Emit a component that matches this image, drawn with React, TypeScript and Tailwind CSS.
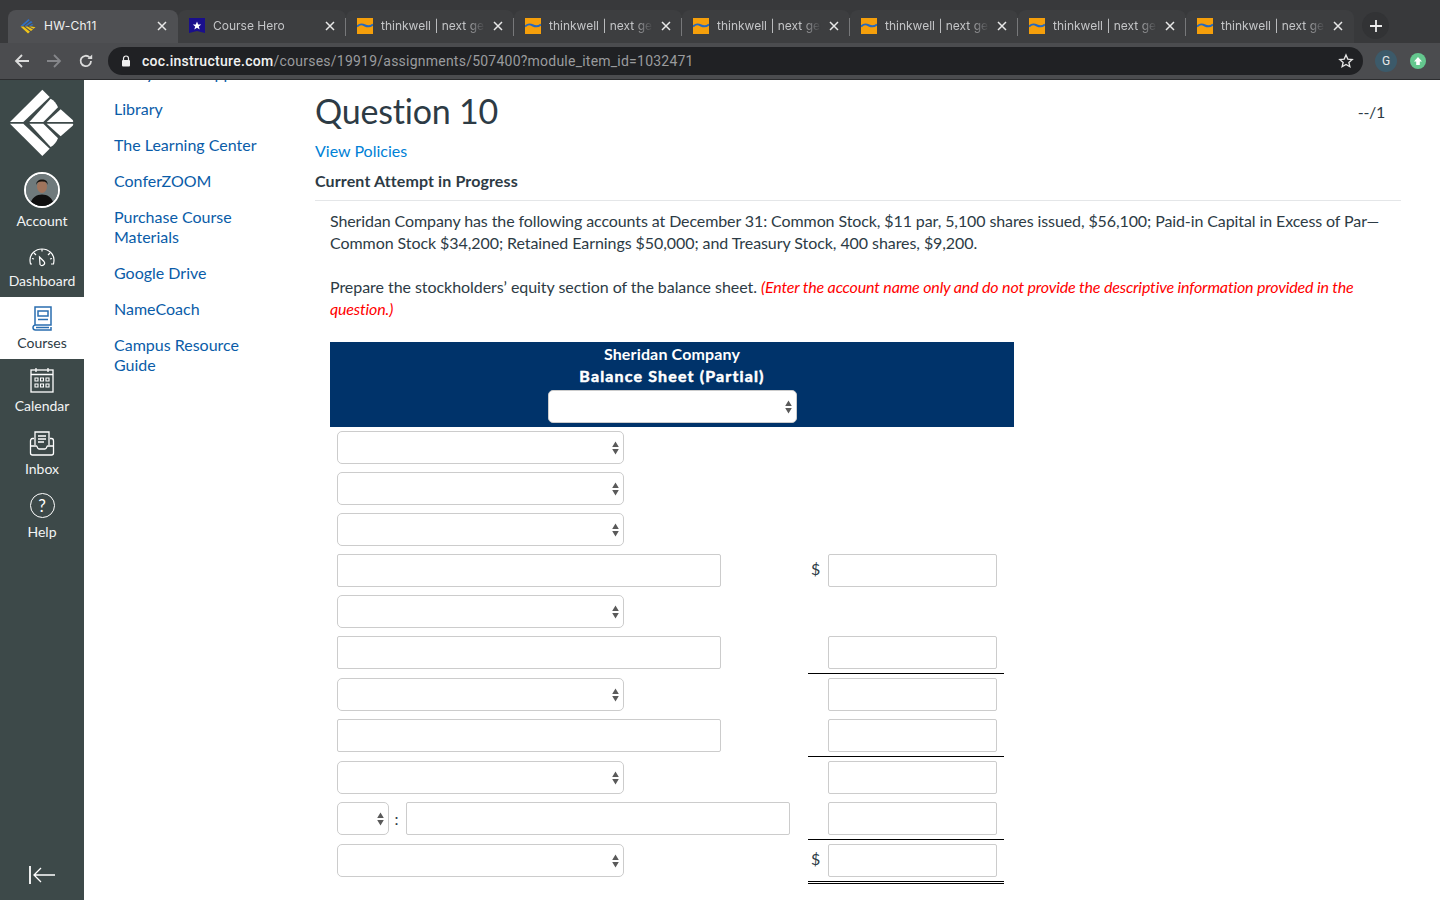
import React from "react";

const lato = { fontFamily: "Lato, sans-serif" };

function Favicon({ kind }: { kind: "canvas" | "hero" | "tw" }) {
  if (kind === "canvas")
    return (
      <svg width="16" height="16" viewBox="0 0 16 16" className="shrink-0">
        <path d="M8.5 1 L0.500 8 L3 8 L9.800 2.300Z M11 3 L4.500 8 L6.500 8 L12.500 4.200Z M12 6 L9 8 L11 8 L13.500 6.800Z" fill="#2f6fc4" />
        <path d="M0.500 8.500L8 15.500 L10 13.800 L3.500 8.500Z M5 8.500 L11 13 L13 11.500 L7.500 8.500Z M9 8.500 L13.500 10.800 L15.500 9.200 L11.500 8.500Z" fill="#f0c419" />
      </svg>
    );
  if (kind === "hero")
    return (
      <svg width="16" height="16" viewBox="0 0 16 16" className="shrink-0">
        <path d="M0 0H16V15L8 13L0 15Z" fill="#1a0f8c" />
        <path d="M8 3.500l1.200 3h3l-2.400 2 .9 3L8 9.800 5.300 11.500l.9-3-2.400-2h3z" fill="#fff" />
      </svg>
    );
  return (
    <svg width="16" height="16" viewBox="0 0 16 16" className="shrink-0">
      <rect width="16" height="16" fill="#f59f0b" />
      <path d="M0 8.500C3 5.500 5 6 8 7.500S13 9 16 6.500" stroke="#2468c0" strokeWidth="2" fill="none" />
    </svg>
  );
}

function X({ color = "#e8e8e8" }: { color?: string }) {
  return (
    <svg width="10" height="10" viewBox="0 0 10 10" className="shrink-0">
      <path d="M1 1L9 9M9 1L1 9" stroke={color} strokeWidth="1.500" />
    </svg>
  );
}

function Tab({ icon, title, active, sep }: { icon: "canvas" | "hero" | "tw"; title: string; active?: boolean; sep?: boolean }) {
  return (
    <div
      className={
        active
          ? "relative flex h-[33px] w-[170px] shrink-0 items-center gap-[8px] rounded-t-[8px] bg-[#4f5053] pb-[1px] pl-[12px] pr-[11px]"
          : "relative flex h-[33px] w-[168px] shrink-0 items-center gap-[8px] rounded-t-[8px] bg-[#3d3e40] pb-[1px] pl-[11px] pr-[11px]"
      }
    >
      <Favicon kind={icon} />
      <span
        className={
          active
            ? "flex-1 overflow-hidden whitespace-nowrap text-[12px] tracking-[0.25px] text-[#f0f0f0]"
            : "flex-1 overflow-hidden whitespace-nowrap text-[12px] text-[#c4c5c7] [mask-image:linear-gradient(to_right,black_80%,transparent)]"
        }
        style={{ fontFamily: "Inter, sans-serif" }}
      >
        {title}
      </span>
      <X />
      {sep && <div className="absolute right-0 top-[8px] h-[18px] w-px bg-[#77787a]" />}
    </div>
  );
}

function ChromeBar() {
  return (
    <div className="shrink-0">
      <div className="flex h-[43px] items-end bg-[#38393b] pl-[8px]">
        <Tab icon="canvas" title="HW-Ch11" active />
        <Tab icon="hero" title="Course Hero" sep />
        {Array.from({ length: 6 }).map((_, i) => (
          <Tab key={i} icon="tw" title="thinkwell | next generation" sep={i < 5} />
        ))}
        <div className="mb-[4px] ml-[8px] flex h-[27px] w-[27px] items-center justify-center rounded-full bg-[#323335]">
          <svg width="14" height="14" viewBox="0 0 14 14">
            <path d="M7 1V13M1 7H13" stroke="#ededed" strokeWidth="1.800" />
          </svg>
        </div>
      </div>
      <div className="flex h-[37px] items-center border-b border-[#2c2d2f] bg-[#4b4c4f] pl-[14px] pr-[14px]">
        <svg width="16" height="16" viewBox="0 0 16 16" className="shrink-0">
          <path d="M15 8H2M8 2L2 8L8 14" stroke="#dcdcdc" strokeWidth="1.800" fill="none" />
        </svg>
        <svg width="16" height="16" viewBox="0 0 16 16" className="ml-[16px] shrink-0">
          <path d="M1 8H14M8 2L14 8L8 14" stroke="#85868a" strokeWidth="1.800" fill="none" />
        </svg>
        <svg width="16" height="16" viewBox="0 0 16 16" className="ml-[16px] shrink-0">
          <path d="M13 8A5.200 5.200 0 1 1 11.500 4.300" stroke="#dcdcdc" strokeWidth="1.800" fill="none" />
          <path d="M9.500 6H14.200V1.500Z" fill="#dcdcdc" />
        </svg>
        <div className="ml-[14px] flex h-[28px] w-[1255px] shrink-0 items-center rounded-full bg-[#202124] pl-[13px] pr-[9px]">
          <svg width="10" height="12" viewBox="0 0 10 12" className="shrink-0">
            <path d="M2.500 5V3.500a2.500 2.500 0 0 1 5 0V5" stroke="#f0f0f0" strokeWidth="1.200" fill="none" />
            <rect x="1" y="5" width="8" height="6.500" rx="1" fill="#f0f0f0" />
          </svg>
          <span className="ml-[11px] flex-1 whitespace-nowrap text-[14px]" style={{ fontFamily: "Roboto, sans-serif" }}>
            <span className="font-medium tracking-[0.3px] text-[#f1f1f1]">coc.instructure.com</span>
            <span className="tracking-[0.23px] text-[#9a9b9e]">/courses/19919/assignments/507400?module_item_id=1032471</span>
          </span>
          <svg width="16" height="16" viewBox="0 0 24 24" className="shrink-0">
            <path d="M12 3l2.700 6.100 6.600.6-5 4.400 1.500 6.500L12 17.200 6.200 20.600l1.500-6.500-5-4.400 6.600-.6z" stroke="#e6e6e6" strokeWidth="2" fill="none" />
          </svg>
        </div>
        <div className="ml-[12px] flex h-[22px] w-[22px] shrink-0 items-center justify-center rounded-full bg-[#3c5a6a] text-[12px] text-[#e8e8e8]" style={{ fontFamily: "Roboto, sans-serif" }}>
          G
        </div>
        <div className="ml-[13px] flex h-[16px] w-[16px] shrink-0 items-center justify-center rounded-full bg-[#64c78e]">
          <svg width="10" height="10" viewBox="0 0 10 10">
            <path d="M5 1L9 5.500H6.800V9H3.200V5.500H1Z" fill="#fff" />
          </svg>
        </div>
      </div>
    </div>
  );
}

function NavItem({ label, active, children, cls, gap }: { label: string; active?: boolean; children: React.ReactNode; cls: string; gap: string }) {
  return (
    <div className={`flex flex-col items-center text-[14px] leading-[20px] ${cls} ${active ? "bg-white text-[#2d3b45]" : "text-[#f2f4f4]"}`}>
      <div className="flex h-[28px] items-center justify-center">{children}</div>
      <span className={gap}>{label}</span>
    </div>
  );
}

function Logo() {
  return (
    <svg width="68" height="68" viewBox="26 13 196 204" fill="#fff">
      <path d="M125 15L147 37L68 112H28Z" />
      <path d="M150 42Q165 50 172 68L128 112H86Z" />
      <path d="M180 74L216 106Q220 111 216 112H138Z" />
      <path d="M28 117H68L147 192L125 214Z" />
      <path d="M86 117H128L172 161Q165 179 150 187Z" />
      <path d="M138 117H216Q220 118 216 123L180 155Z" />
    </svg>
  );
}

function Sidebar() {
  return (
    <div className="flex w-[84px] shrink-0 flex-col bg-[#3d4949]" style={lato}>
      <div className="flex h-[86px] items-center justify-center">
        <Logo />
      </div>
      <div className="flex h-[67px] flex-col items-center pt-[6px] text-[14px] leading-[20px] text-[#f2f4f4]">
        <div className="flex h-[36px] w-[36px] items-center justify-center overflow-hidden rounded-full border-2 border-white bg-[#6f7a7c]">
          <svg width="32" height="32" viewBox="0 0 32 32">
            <rect width="32" height="32" fill="#6f7a7c" />
            <ellipse cx="16" cy="12.500" rx="5" ry="6.500" fill="#a0745c" />
            <path d="M10.500 11C9 4 23 3.500 21.500 11C21 8 19 7.500 16 7.500S11 8 10.500 11Z" fill="#16120f" />
            <path d="M4 32C5 23 11 20.500 16 20.500S27 23 28 32Z" fill="#0f0f0f" />
          </svg>
        </div>
        <span className="mt-[3px]">Account</span>
      </div>
      <NavItem label="Dashboard" cls="h-[64px] pt-[10px]" gap="mt-0">
        <svg width="26" height="20" viewBox="0 0 26 20" fill="none" stroke="#fff" strokeWidth="1.200">
          <path d="M3 17H1.500C1.200 15.500 1 14.500 1 13A12 11 0 0 1 25 13C25 14.500 24.800 15.500 24.500 17H22" />
          <path d="M5 6L7 8M13 2V4.500M21 6L19 8M3 11.500L5 12M23 11.500L21 12" />
          <path d="M10.500 10L15 14.500A2.500 2.500 0 0 1 11 17.500Z" />
        </svg>
      </NavItem>
      <NavItem label="Courses" active cls="h-[62px] pt-[7px]" gap="mt-[1px]">
        <svg width="20" height="25" viewBox="0 0 20 25" fill="none" stroke="#2a6eb0" strokeWidth="1.500">
          <path d="M3 19V1H19V19H3.500A2.500 2.500 0 0 0 3.500 24H19V21" />
          <rect x="6" y="5" width="10" height="5" />
          <path d="M6 13.500H16" />
          <path d="M4 21.500H17" />
        </svg>
      </NavItem>
      <NavItem label="Calendar" cls="h-[63px] pt-[7px]" gap="mt-[2px]">
        <svg width="24" height="26" viewBox="0 0 24 26" fill="none" stroke="#fff" strokeWidth="1.300">
          <rect x="1" y="3" width="22" height="22" />
          <path d="M1 7.500H23M6 1V5M18 1V5" />
          <path d="M5 11h3v3H5zM10.500 11h3v3h-3zM16 11h3v3h-3zM5 17h3v3H5zM10.500 17h3v3h-3zM16 17h3v3h-3z" strokeWidth="1.100" />
        </svg>
      </NavItem>
      <NavItem label="Inbox" cls="h-[63px] pt-[7px]" gap="mt-[2px]">
        <svg width="26" height="25" viewBox="0 0 26 25" fill="none" stroke="#fff" strokeWidth="1.300">
          <path d="M6 14V1H20V14" />
          <path d="M9 5H17M9 8H17M9 11H15" />
          <path d="M5 7.500H3.500C2 7.500 1.500 9 1.500 10V22A2 2 0 0 0 3.500 24H22.500A2 2 0 0 0 24.500 22V10C24.500 9 24 7.500 22.500 7.500H21" />
          <path d="M1.500 15H7.500C8.500 15 8 18 10 18H16C18 18 17.500 15 18.500 15H24.500" />
        </svg>
      </NavItem>
      <NavItem label="Help" cls="h-[63px] pt-[6px]" gap="mt-[3px]">
        <div className="flex h-[25px] w-[25px] items-center justify-center rounded-full border-[1.500px] border-white text-[17px] leading-none text-white" style={lato}>
          ?
        </div>
      </NavItem>
      <div className="mt-auto flex h-[50px] items-start justify-center pt-[16px]">
        <svg width="26" height="18" viewBox="0 0 26 18" fill="none" stroke="#fff" strokeWidth="1.300">
          <path d="M1 0V18" strokeWidth="1.800" />
          <path d="M26 9H5M12 2L5 9L12 16" />
        </svg>
      </div>
    </div>
  );
}

function SubNav() {
  const links = ["Study Skills Support", "Library", "The Learning Center", "ConferZOOM", "Purchase Course Materials", "Google Drive", "NameCoach", "Campus Resource Guide"];
  return (
    <div className="-mt-[17px] w-[231px] shrink-0 pl-[30px] pr-[44px] text-[16px] leading-[20px] text-[#0a5ca8]" style={lato}>
      {links.map((l) => (
        <div key={l} className="mb-[16px]">
          {l}
        </div>
      ))}
    </div>
  );
}

function Arrows() {
  return (
    <svg width="7" height="14" viewBox="0 0 7 14" className="shrink-0">
      <path d="M3.500 0.500L6.800 6H0.200Z M3.500 13.500L0.200 8H6.800Z" fill="#5a5a5a" />
    </svg>
  );
}

function Select({ w }: { w: string }) {
  return (
    <div className={`flex h-[33px] ${w} shrink-0 items-center justify-end rounded-[5px] border border-[#cccccc] bg-white pr-[4px]`}>
      <Arrows />
    </div>
  );
}

function TextBox({ w }: { w: string }) {
  return <div className={`h-[33px] ${w} shrink-0 rounded-[2px] border border-[#cccccc] bg-white`} />;
}

function Row({ left, dollar, amount, line, pt }: { left: React.ReactNode; dollar?: boolean; amount?: boolean; line?: "single" | "double"; pt?: string }) {
  return (
    <div className={`flex items-start pl-[7px] ${pt ?? "pt-[8px]"}`}>
      <div className="w-[471px] shrink-0">{left}</div>
      <div className="w-[196px] shrink-0">
        <div className="flex h-[33px] items-center">
          <span className="-mt-[3px] w-[20px] pl-[3px] text-[16px] text-[#2d3b45]">{dollar ? "$" : ""}</span>
          {amount && <TextBox w="w-[169px]" />}
        </div>
        {line === "single" && <div className="mt-[4px] h-px bg-black" />}
        {line === "double" && <div className="mt-[4px] h-[3px] border-y border-black" />}
      </div>
    </div>
  );
}

function Form() {
  const sel = <Select w="w-[287px]" />;
  const txt = <TextBox w="w-[384px]" />;
  return (
    <div className="w-[684px]">
      <div className="flex h-[85px] flex-col items-center bg-[#00336a] pt-[2px] text-[16px] leading-[22px] text-white">
        <div className="-mt-[1px] font-bold tracking-[0.15px]">Sheridan Company</div>
        <div className="font-bold tracking-[1.15px] [-webkit-text-stroke:0.5px_white]">Balance Sheet (Partial)</div>
        <div className="mt-[3px] flex h-[33px] w-[249px] items-center justify-end rounded-[5px] border border-[#cccccc] bg-white pr-[4px]">
          <Arrows />
        </div>
      </div>
      <Row left={sel} pt="pt-[4px]" />
      <Row left={sel} />
      <Row left={sel} />
      <Row left={txt} dollar amount />
      <Row left={sel} />
      <Row left={txt} amount line="single" />
      <div className="-mt-[4px]">
        <Row left={sel} amount />
      </div>
      <Row left={txt} amount line="single" />
      <div className="-mt-[4px]">
        <Row left={sel} amount />
      </div>
      <Row
        left={
          <div className="flex items-center">
            <Select w="w-[52px]" />
            <span className="w-[17px] pr-[2px] text-center text-[16px] text-[#2d3b45]">:</span>
            <TextBox w="w-[384px]" />
          </div>
        }
        amount
        line="single"
      />
      <div className="-mt-[4px]">
        <Row left={sel} dollar amount line="double" />
      </div>
    </div>
  );
}

function Content() {
  return (
    <div className="w-[1086px] shrink-0 text-[#2d3b45]" style={lato}>
      <div className="flex items-start justify-between pr-[16px]">
        <h1 className="mt-[9px] text-[34px] leading-[44px] tracking-[-0.2px]">Question 10</h1>
        <span className="mt-[21px] text-[16px] leading-[22px] tracking-[-0.3px]">--/1</span>
      </div>
      <div className="mt-[7px] text-[16px] leading-[22px] text-[#0081d6]">View Policies</div>
      <div className="mt-[8px] border-b border-[#e4e6e8] pb-[8px] text-[16px] font-bold leading-[22px] tracking-[0.12px]">Current Attempt in Progress</div>
      <div className="pl-[15px] pr-[10px] pt-[9px] text-[16px] leading-[22px] tracking-[-0.1px]">
        <p>
          Sheridan Company has the following accounts at December 31: Common Stock, $11 par, 5,100 shares issued, $56,100; Paid-in Capital in Excess of Par—
          <br />
          <span className="tracking-[-0.07px]">Common Stock $34,200; Retained Earnings $50,000; and Treasury Stock, 400 shares, $9,200.</span>
        </p>
        <p className="mt-[22px] tracking-[-0.05px]">
          Prepare the stockholders’ equity section of the balance sheet.{" "}
          <em className="tracking-[-0.16px] text-[#ff0000]">(Enter the account name only and do not provide the descriptive information provided in the question.)</em>
        </p>
        <div className="mt-[22px]">
          <Form />
        </div>
      </div>
    </div>
  );
}

export default function App() {
  return (
    <div className="flex h-[900px] w-[1440px] flex-col overflow-hidden bg-white">
      <div className="relative z-10">
        <ChromeBar />
      </div>
      <div className="flex min-h-0 flex-1">
        <Sidebar />
        <SubNav />
        <Content />
      </div>
    </div>
  );
}
